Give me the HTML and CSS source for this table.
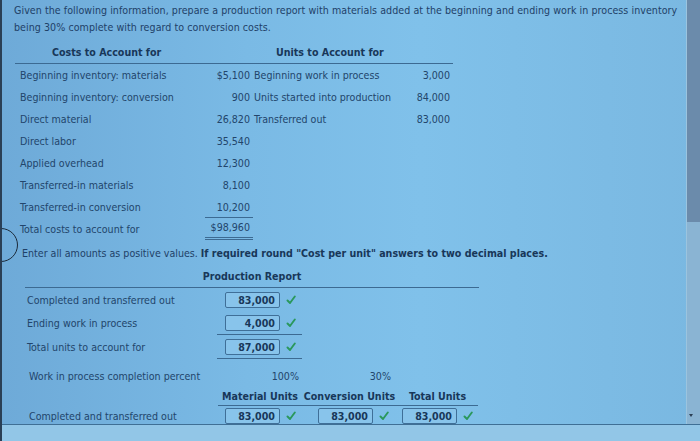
FILE: index.html
```html
<!DOCTYPE html>
<html>
<head>
<meta charset="utf-8">
<link rel="stylesheet" href="styles.css">
</head>
<body>
<div class="screen">
  <div class="pane">
    <div class="content">
      <p class="intro">Given the following information, prepare a production report with materials added at the beginning and ending work in process inventory<br>being 30% complete with regard to conversion costs.</p>

      <div class="costs">
        <div class="costs-head">
          <span class="ch1">Costs to Account for</span>
          <span class="ch2">Units to Account for</span>
        </div>
        <div class="costs-grid">
          <span>Beginning inventory: materials</span><span class="num">$5,100</span><span class="ulabel">Beginning work in process</span><span class="num">3,000</span>
          <span>Beginning inventory: conversion</span><span class="num">900</span><span class="ulabel">Units started into production</span><span class="num">84,000</span>
          <span>Direct material</span><span class="num">26,820</span><span class="ulabel">Transferred out</span><span class="num">83,000</span>
          <span>Direct labor</span><span class="num">35,540</span><span></span><span></span>
          <span>Applied overhead</span><span class="num">12,300</span><span></span><span></span>
          <span>Transferred-in materials</span><span class="num">8,100</span><span></span><span></span>
          <span>Transferred-in conversion</span><span class="num">10,200</span><span></span><span></span>
          <span>Total costs to account for</span><span class="num totalcell"><span class="total">$98,960</span></span><span></span><span></span>
        </div>
      </div>

      <p class="instr">Enter all amounts as positive values. <b>If required round "Cost per unit" answers to two decimal places.</b></p>

      <div class="report">
        <div class="report-title">Production Report</div>
        <div class="rrow">
          <span class="rlabel">Completed and transferred out</span>
          <span class="rcell"><span class="box">83,000</span><svg class="check" viewBox="0 0 10 10"><path d="M1.5 5.5 L4 8 L8.8 1.5"/></svg></span>
        </div>
        <div class="rrow">
          <span class="rlabel">Ending work in process</span>
          <span class="rcell"><span class="box">4,000</span><svg class="check" viewBox="0 0 10 10"><path d="M1.5 5.5 L4 8 L8.8 1.5"/></svg></span>
        </div>
        <div class="rrow rtotal">
          <span class="rlabel">Total units to account for</span>
          <span class="rcell ruled"><span class="box">87,000</span><svg class="check" viewBox="0 0 10 10"><path d="M1.5 5.5 L4 8 L8.8 1.5"/></svg></span>
        </div>

        <div class="prow wip">
          <span class="plabel">Work in process completion percent</span>
          <span class="pc1 right">100%</span>
          <span class="pc2 right">30%</span>
          <span class="pc3"></span>
        </div>
        <div class="prow heads">
          <span class="plabel"></span>
          <span class="headcols">
            <span class="pc1 ctr">Material Units</span>
            <span class="pc2 ctr">Conversion Units</span>
            <span class="pc3 ctr">Total Units</span>
          </span>
        </div>
        <div class="prow last">
          <span class="plabel">Completed and transferred out</span>
          <span class="pc1 in1"><span class="box">83,000</span><svg class="check" viewBox="0 0 10 10"><path d="M1.5 5.5 L4 8 L8.8 1.5"/></svg></span>
          <span class="pc2 in2"><span class="box">83,000</span><svg class="check" viewBox="0 0 10 10"><path d="M1.5 5.5 L4 8 L8.8 1.5"/></svg></span>
          <span class="pc3 in3"><span class="box">83,000</span><svg class="check" viewBox="0 0 10 10"><path d="M1.5 5.5 L4 8 L8.8 1.5"/></svg></span>
        </div>
      </div>
    </div>
    <div class="scrollbar">
      <div class="thumb"></div>
      <div class="track"><span class="arrow"></span></div>
    </div>
  </div>
  <div class="footer"></div>
  <div class="circle"></div>
</div>
</body>
</html>
```

FILE: styles.css
```css
html, body {
  margin: 0;
  padding: 0;
}

body {
  font-family: "DejaVu Sans Condensed", "DejaVu Sans", Verdana, sans-serif;
  font-size: 10.6px;
  color: #22456b;
}

.screen {
  position: relative;
  width: 700px;
  height: 441px;
  overflow: hidden;
  display: flex;
  flex-direction: column;
  background: linear-gradient(90deg, #6eaad8 0%, #7abae5 35%, #80c1ea 60%, #7ab8e1 100%);
  border-left: 2px solid #2a3f55;
  box-sizing: border-box;
}

.pane {
  height: 424px;
  display: flex;
  flex-shrink: 0;
}

.content {
  flex: 1;
  padding-left: 12px;
  overflow: hidden;
}

.intro {
  margin: 2px 0 0;
  line-height: 17px;
  white-space: nowrap;
  color: #1f4168;
  letter-spacing: 0.05px;
}

/* Costs / units table */
.costs {
  margin: 5px 0 0 6px;
}

.costs-head {
  display: flex;
  width: 438px;
  margin-left: -5px;
  height: 23px;
  line-height: 22px;
  box-sizing: border-box;
  border-bottom: 1px solid #3c6a92;
  font-weight: bold;
  color: #183759;
}

.ch1 {
  width: 224px;
  padding-left: 37px;
}

.costs-grid {
  display: grid;
  grid-template-columns: 160px 70px 144px 56px;
  grid-auto-rows: 22px;
  line-height: 22px;
  white-space: nowrap;
}

.num {
  text-align: right;
}

.ulabel {
  padding-left: 4px;
}

.totalcell {
  display: flex;
  justify-content: flex-end;
  align-items: flex-start;
}

.total {
  display: inline-block;
  width: 45px;
  margin-top: -1px;
  margin-right: -3px;
  padding-right: 3px;
  line-height: 19px;
  text-align: right;
  border-top: 1px solid #3c6a92;
  border-bottom: 3px double #3c6a92;
}

.instr {
  margin: 5px 0 0 8px;
  line-height: 16px;
  white-space: nowrap;
  color: #1f4168;
}

.instr b {
  color: #183759;
}

/* Production report */
.report {
  margin-left: 11px;
  width: 454px;
}

.report-title {
  margin-top: 7px;
  line-height: 16px;
  padding-bottom: 3px;
  text-align: center;
  font-weight: bold;
  color: #183759;
  border-bottom: 1px solid #3c6a92;
}

.rrow {
  display: flex;
  height: 23px;
  align-items: center;
}

.rlabel {
  width: 192px;
  padding-left: 2px;
  box-sizing: border-box;
}

.rcell {
  width: 85px;
  padding-left: 8px;
  box-sizing: border-box;
  display: flex;
  align-items: center;
  height: 100%;
}

.rtotal {
  height: 25px;
}

.ruled {
  border-top: 1px solid #3c6a92;
  border-bottom: 1px solid #3c6a92;
}

.box {
  display: inline-block;
  width: 55px;
  height: 16px;
  line-height: 14px;
  box-sizing: border-box;
  border: 1px solid #3f6f98;
  border-radius: 2px;
  background: #88c4eb;
  text-align: right;
  padding-right: 4px;
  font-weight: bold;
  color: #183759;
  flex-shrink: 0;
}

.check {
  width: 10px;
  height: 10px;
  margin-left: 6px;
  flex-shrink: 0;
  fill: none;
  stroke: #2a985c;
  stroke-width: 1.9;
  stroke-linecap: round;
  stroke-linejoin: round;
}

.prow {
  display: flex;
  white-space: nowrap;
}

.plabel {
  width: 193px;
  padding-left: 4px;
  box-sizing: border-box;
  flex-shrink: 0;
}

.pc1 { width: 84px; box-sizing: border-box; flex-shrink: 0; }
.pc2 { width: 95px; box-sizing: border-box; flex-shrink: 0; }
.pc3 { width: 81px; box-sizing: border-box; flex-shrink: 0; }

.right { text-align: right; }
.pc1.right { padding-right: 3px; }
.pc2.right { padding-right: 6px; }

.wip {
  margin-top: 8px;
  height: 18px;
  line-height: 18px;
}

.heads {
  margin-top: 3px;
  height: 18px;
  line-height: 17px;
}

.headcols {
  display: flex;
  border-bottom: 1px solid #3c6a92;
  font-weight: bold;
  color: #183759;
}

.ctr { text-align: center; }

.last {
  height: 22px;
  padding-top: 2px;
  align-items: flex-start;
  line-height: 17px;
}

.in1, .in2, .in3 {
  display: flex;
  align-items: center;
}

.in1 { padding-left: 7px; }
.in2 { padding-left: 16px; }
.in3 { padding-left: 5px; }

/* Scrollbar */
.scrollbar {
  width: 13px;
  display: flex;
  flex-direction: column;
  flex-shrink: 0;
  border-left: 1px solid #9cc4de;
}

.thumb {
  height: 222px;
  background: #6b8bab;
}

.track {
  flex: 1;
  position: relative;
  background: #8ab4d3;
}

.arrow {
  position: absolute;
  left: 2px;
  bottom: 7px;
  width: 0;
  height: 0;
  border-left: 2px solid transparent;
  border-right: 2px solid transparent;
  border-top: 3px solid #2b3f55;
}

.footer {
  flex: 1;
  border-top: 1px solid #3f6f95;
  background: #92c6e7;
}

.circle {
  position: absolute;
  left: -18px;
  top: 228px;
  width: 32px;
  height: 32px;
  border: 1.5px solid #1c2a3a;
  border-radius: 50%;
}
```
